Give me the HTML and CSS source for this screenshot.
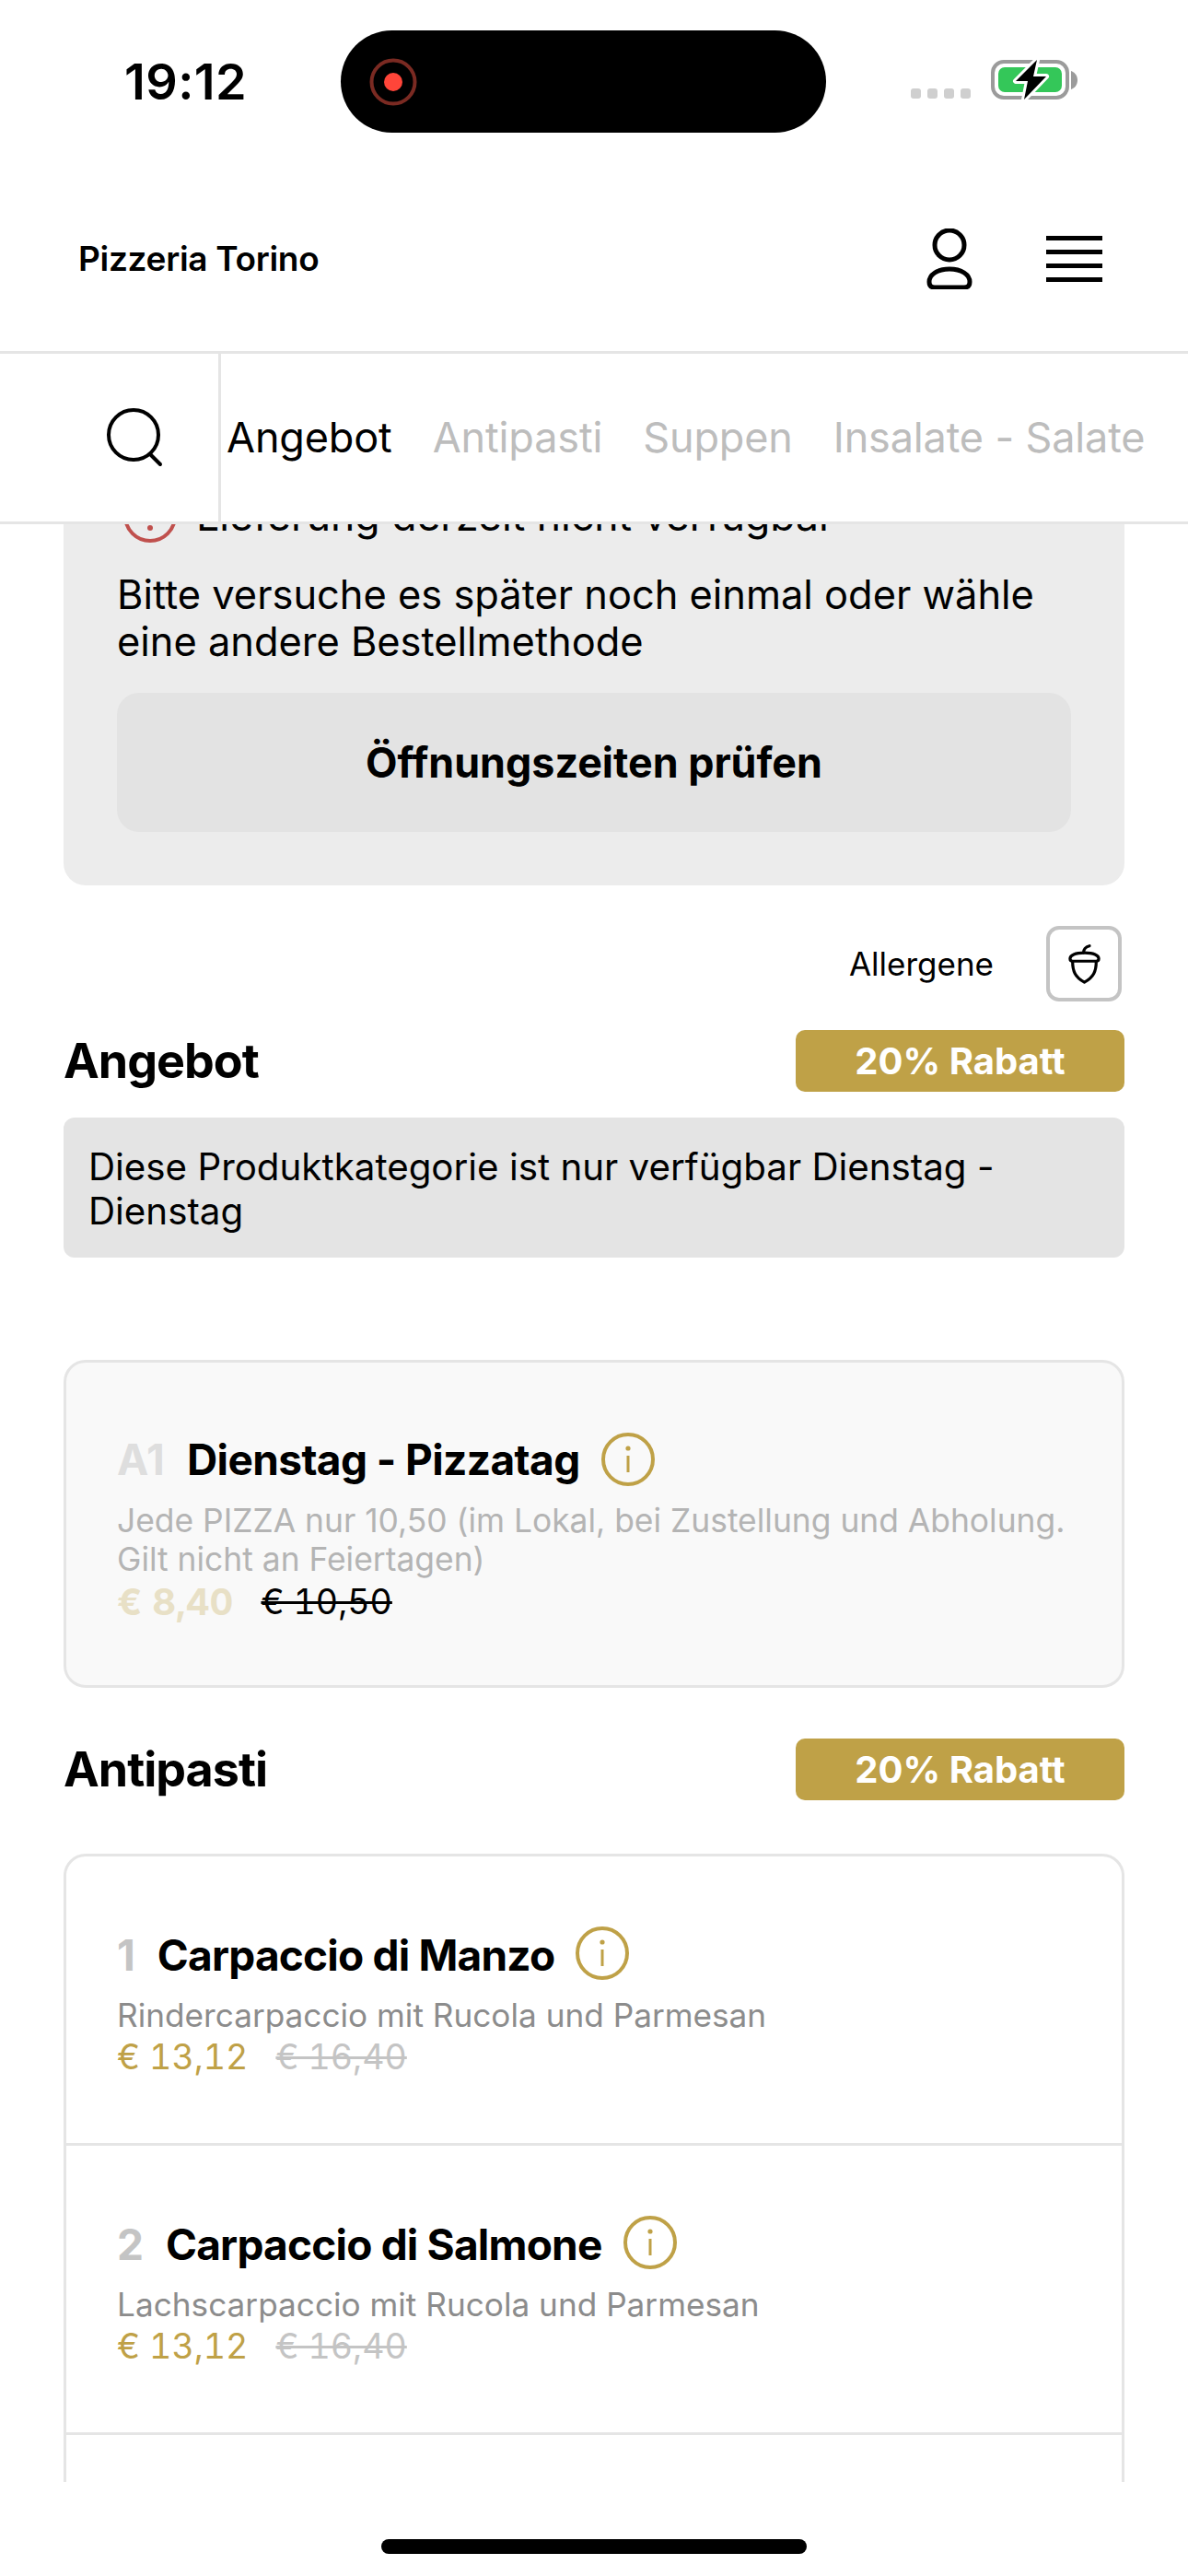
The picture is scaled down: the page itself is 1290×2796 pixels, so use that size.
FILE: index.html
```html
<!DOCTYPE html>
<html lang="de">
<head>
<meta charset="utf-8">
<title>Pizzeria Torino</title>
<link rel="stylesheet" href="styles.css">
</head>
<body>
<div class="page">
  <div class="status">
    <span class="time">19:12</span>
    <div class="island">
      <svg class="rec" viewBox="0 0 54 54" width="54" height="54"><circle cx="27" cy="27" r="23.5" fill="none" stroke="#7a2a22" stroke-width="4"/><circle cx="27" cy="27" r="10" fill="#ff4539"/></svg>
    </div>
    <div class="status-right">
      <div class="signal"><i></i><i></i><i></i><i></i></div>
      <svg class="battery" viewBox="0 0 96 48" width="96" height="48">
        <rect x="3" y="4" width="81" height="39" rx="12" fill="none" stroke="#9b9b9b" stroke-width="4"/>
        <path d="M88 14c3 1 7 4 7 10s-4 9-7 10z" fill="#9b9b9b"/>
        <rect x="9" y="10" width="69" height="27" rx="7" fill="#34c759"/>
        <path d="M51 2 28 25h13l-4 20 24-25H47z" fill="#000" stroke="#fff" stroke-width="6" stroke-linejoin="round" paint-order="stroke"/>
      </svg>
    </div>
  </div>

  <header class="header">
    <span class="brand">Pizzeria Torino</span>
    <div class="header-icons">
      <svg class="user" viewBox="0 0 54 66" width="54" height="66"><circle cx="27" cy="18" r="16" fill="none" stroke="#000" stroke-width="5"/><path d="M27 44c-13 0-22 6-22 14 0 4 2 6 6 6h32c4 0 6-2 6-6 0-8-9-14-22-14z" fill="none" stroke="#000" stroke-width="5"/></svg>
      <div class="burger"><i></i><i></i><i></i><i></i></div>
    </div>
  </header>

  <nav class="tabs">
    <div class="search-cell">
      <svg viewBox="0 0 66 66" width="66" height="66"><circle cx="31" cy="30" r="27" fill="none" stroke="#000" stroke-width="4"/><path d="M49 51l11 11" stroke="#000" stroke-width="4" stroke-linecap="round"/></svg>
    </div>
    <div class="tab-list">
      <span class="tab active">Angebot</span>
      <span class="tab">Antipasti</span>
      <span class="tab">Suppen</span>
      <span class="tab">Insalate - Salate</span>
    </div>
  </nav>

  <main class="scroller">
    <section class="alert">
      <div class="alert-head">
        <svg viewBox="0 0 60 60" width="60" height="60"><circle cx="30" cy="30" r="27" fill="none" stroke="#c0504d" stroke-width="4"/><path d="M30 14v20" stroke="#c0504d" stroke-width="4"/><circle cx="30" cy="43" r="3" fill="#c0504d"/></svg>
        <span>Lieferung derzeit nicht verfügbar</span>
      </div>
      <p class="alert-text">Bitte versuche es später noch einmal oder wähle eine andere Bestellmethode</p>
      <div class="alert-btn">Öffnungszeiten prüfen</div>
    </section>

    <div class="allergens">
      <span>Allergene</span>
      <div class="allergen-box">
        <svg viewBox="0 0 40 48" width="37" height="44"><path d="M19 11c0-4 3-7 7-8" fill="none" stroke="#000" stroke-width="3.5" stroke-linecap="round"/><path d="M3 18c0-4 6-7 17-7s17 3 17 7c0 2-1 3-3 3H6c-2 0-3-1-3-3z" fill="none" stroke="#000" stroke-width="3.5" stroke-linejoin="round"/><path d="M6 21c0 12 3 19 14 25 11-6 14-13 14-25" fill="none" stroke="#000" stroke-width="3.5" stroke-linejoin="round"/></svg>
      </div>
    </div>

    <div class="section-head">
      <h2>Angebot</h2>
      <span class="badge">20% Rabatt</span>
    </div>
    <div class="notice">Diese Produktkategorie ist nur verfügbar Dienstag - Dienstag</div>

    <ul class="card card-off">
      <li class="item">
        <div class="item-title">
          <span class="num">A1</span><span class="name">Dienstag - Pizzatag</span>
          <svg class="info" viewBox="0 0 60 60" width="60" height="60"><circle cx="30" cy="30" r="27" fill="none" stroke="#bfa147" stroke-width="4"/><circle cx="30" cy="18" r="2.6" fill="#bfa147"/><path d="M30 26v18" stroke="#bfa147" stroke-width="3"/></svg>
        </div>
        <p class="desc">Jede PIZZA nur 10,50 (im Lokal, bei Zustellung und Abholung. Gilt nicht an Feiertagen)</p>
        <div class="prices"><span class="price">€ 8,40</span><s class="old">€ 10,50</s></div>
      </li>
    </ul>

    <div class="section-head second">
      <h2>Antipasti</h2>
      <span class="badge">20% Rabatt</span>
    </div>

    <ul class="card card-list">
      <li class="item">
        <div class="item-title">
          <span class="num">1</span><span class="name">Carpaccio di Manzo</span>
          <svg class="info" viewBox="0 0 60 60" width="60" height="60"><circle cx="30" cy="30" r="27" fill="none" stroke="#bfa147" stroke-width="4"/><circle cx="30" cy="18" r="2.6" fill="#bfa147"/><path d="M30 26v18" stroke="#bfa147" stroke-width="3"/></svg>
        </div>
        <p class="desc">Rindercarpaccio mit Rucola und Parmesan</p>
        <div class="prices"><span class="price">€ 13,12</span><s class="old">€ 16,40</s></div>
      </li>
      <li class="item">
        <div class="item-title">
          <span class="num">2</span><span class="name">Carpaccio di Salmone</span>
          <svg class="info" viewBox="0 0 60 60" width="60" height="60"><circle cx="30" cy="30" r="27" fill="none" stroke="#bfa147" stroke-width="4"/><circle cx="30" cy="18" r="2.6" fill="#bfa147"/><path d="M30 26v18" stroke="#bfa147" stroke-width="3"/></svg>
        </div>
        <p class="desc">Lachscarpaccio mit Rucola und Parmesan</p>
        <div class="prices"><span class="price">€ 13,12</span><s class="old">€ 16,40</s></div>
      </li>
      <li class="item item-next"></li>
    </ul>
  </main>

  <div class="home-zone"><div class="home-bar"></div></div>
</div>
</body>
</html>
```
FILE: styles.css
```css
* { box-sizing: border-box; }
html, body { margin: 0; padding: 0; background: #fff; }
body { font-family: Inter, "Liberation Sans", sans-serif; color: #000; }
.page { width: 1290px; height: 2796px; overflow: hidden; display: flex; flex-direction: column; }
p, ul, h2 { margin: 0; padding: 0; }
ul { list-style: none; }

.status { height: 150px; padding: 33px 119px 0 135px; display: flex; align-items: flex-start; flex: none; }
.time { width: 236px; height: 111px; line-height: 111px; font-size: 54px; font-weight: 600; letter-spacing: 0.4px; }
.island { width: 527px; height: 111px; background: #000; border-radius: 56px; display: flex; align-items: center; padding-left: 30px; flex: none; }
.status-right { margin-left: 92px; height: 111px; display: flex; align-items: flex-start; gap: 21px; padding-top: 30px; }
.signal { display: flex; gap: 7px; margin-top: 33px; }
.signal i { width: 11px; height: 11px; border-radius: 3px; background: #cfcfcf; }

.header { height: 231px; padding: 30px 93px 0 85px; display: flex; align-items: center; justify-content: space-between; flex: none; }
.brand { font-size: 37px; font-weight: 600; letter-spacing: -0.3px; }
.header-icons { display: flex; align-items: center; gap: 78px; }
.burger { width: 61px; display: flex; flex-direction: column; gap: 10px; }
.burger i { height: 5px; background: #000; }

.tabs { height: 188px; border-top: 3px solid #e5e5e5; border-bottom: 3px solid #e5e5e5; display: flex; background: #fff; flex: none; }
.search-cell { width: 240px; border-right: 3px solid #e5e5e5; padding-left: 114px; display: flex; align-items: center; }
.tab-list { display: flex; align-items: center; gap: 44px; padding: 0 0 2px 6px; white-space: nowrap; }
.tab { font-size: 45px; letter-spacing: -0.15px; color: #bdbdbd; }
.tab.active { color: #000; }

.scroller { height: 2125px; overflow: hidden; padding: 0 69px; flex: none; }
.alert { margin-top: -69px; background: #ececec; border-radius: 24px; padding: 30px 58px 58px; }
.alert-head { height: 60px; display: flex; align-items: center; gap: 20px; font-size: 44.5px; }
.alert-head svg { margin-left: 6px; }
.alert-text { margin-top: 30px; font-size: 43.4px; line-height: 51px; }
.alert-btn { margin-top: 30px; height: 151px; background: #e3e3e3; border-radius: 24px; display: flex; align-items: center; justify-content: center; font-size: 44.8px; font-weight: 700; }

.allergens { margin-top: 44px; height: 82px; display: flex; align-items: center; justify-content: flex-end; gap: 57px; padding-right: 3px; font-size: 35px; }
.allergen-box { width: 82px; height: 82px; border: 4px solid #c4c4c4; border-radius: 14px; display: flex; align-items: center; justify-content: center; }

.section-head { margin-top: 31px; height: 67px; display: flex; align-items: center; justify-content: space-between; }
.section-head.second { margin-top: 55px; }
.section-head h2 { font-size: 52px; font-weight: 700; letter-spacing: -1px; }
.badge { width: 357px; height: 67px; background: #bfa147; border-radius: 10px; color: #fff; display: flex; align-items: center; justify-content: center; font-size: 40px; font-weight: 700; }
.notice { margin-top: 28px; height: 152px; background: #e4e4e4; border-radius: 12px; padding: 30px 27px; font-size: 40.3px; line-height: 48px; }

.card { border: 3px solid #e5e5e5; border-radius: 24px; }
.card-off { margin-top: 111px; height: 356px; background: #f9f9f9; }
.card-off .item { padding: 75px 50px 0 55px; border-bottom: 0; }
.card-off .num { color: #dedede; }
.card-off .desc { color: #b4b4b4; margin-top: 16px; font-size: 35.4px; }
.card-off .price { color: #e8e0c6; font-weight: 700; font-size: 40px; }
.card-off .old { color: #000; }
.card-list { margin-top: 58px; }
.card-list .name { letter-spacing: -0.8px; }
.card-list .info { margin-bottom: 4px; }
.item { padding: 77px 55px 70px; border-bottom: 3px solid #e5e5e5; }
.item-next { height: 200px; border-bottom: 0; }
.item-title { height: 60px; display: flex; align-items: center; }
.num { font-size: 46px; font-weight: 700; color: #c4c4c4; margin-right: 24px; }
.name { font-size: 46px; font-weight: 700; letter-spacing: -0.6px; }
.info { margin-left: 22px; }
.desc { margin-top: 14px; font-size: 35.2px; line-height: 42px; color: #8c8c8c; }
.prices { height: 48px; display: flex; align-items: center; gap: 30px; font-size: 37.5px; font-variant-numeric: tabular-nums; }
.price { color: #bfa147; }
.old { color: #c4c4c4; }

.home-zone { flex: 1; display: flex; justify-content: center; padding-top: 62px; }
.home-bar { width: 462px; height: 16px; border-radius: 8px; background: #000; }
```
